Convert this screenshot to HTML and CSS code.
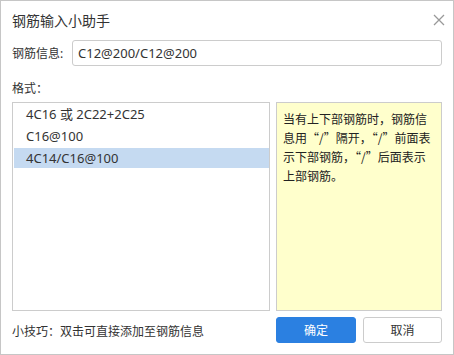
FILE: index.html
```html
<!DOCTYPE html>
<html lang="zh-CN">
<head>
    <meta charset="UTF-8">
    <title>钢筋输入小助手</title>
    <link rel="stylesheet" href="styles.css">
</head>
<body>
    <div class="dialog">
        <div class="header">
            <span class="title">钢筋输入小助手</span>
            <span class="close">
                <svg width="12" height="12" viewBox="0 0 12 12"><path d="M1 1L11 11M11 1L1 11" stroke="#999" stroke-width="1.3" fill="none"/></svg>
            </span>
        </div>
        <div class="row">
            <label for="info">钢筋信息:</label>
            <input type="text" id="info" value="C12@200/C12@200">
        </div>
        <div class="format-label">格式：</div>
        <div class="panels">
            <div class="list">
                <div class="item">4C16 或 2C22+2C25</div>
                <div class="item">C16@100</div>
                <div class="item selected">4C14/C16@100</div>
            </div>
            <div class="hint">当有上下部钢筋时，钢筋信息用“/”隔开，“/”前面表示下部钢筋，“/”后面表示上部钢筋。</div>
        </div>
        <div class="footer">
            <span class="tip">小技巧：双击可直接添加至钢筋信息</span>
            <button class="btn primary">确定</button>
            <button class="btn">取消</button>
        </div>
    </div>
</body>
</html>
```

FILE: styles.css
```css
body {
    margin: 0;
    font-family: "Noto Sans", "Noto Sans CJK SC", sans-serif;
    color: #333;
}
.dialog {
    width: 454px;
    height: 355px;
    box-sizing: border-box;
    border: 1px solid #c6c6c6;
    background: #fff;
    padding: 0 11px;
    display: flex;
    flex-direction: column;
}
.header {
    height: 38px;
    display: flex;
    align-items: center;
    justify-content: space-between;
}
.title {
    font-size: 14px;
}
.close {
    display: flex;
    margin-right: -3px;
}
.row {
    display: flex;
    align-items: center;
    gap: 8px;
    margin-top: 1px;
}
.row label {
    font-size: 12px;
    width: 52px;
}
.row input {
    flex: 1;
    height: 26px;
    box-sizing: border-box;
    border: 1px solid #ccc;
    border-radius: 3px;
    padding: 0 5px;
    font-family: inherit;
    font-size: 13px;
    color: #333;
    outline: none;
}
.format-label, .tip, .hint {
    font-family: "Noto Sans CJK SC", sans-serif;
}
.format-label {
    font-size: 12px;
    height: 36px;
    line-height: 44px;
}
.panels {
    display: flex;
    gap: 6px;
    height: 209px;
}
.list {
    width: 258px;
    box-sizing: border-box;
    border: 1px solid #ccc;
    padding: 1px 0 1px 1px;
    display: flex;
    flex-direction: column;
    gap: 2px;
}
.item {
    height: 20px;
    line-height: 20px;
    padding-left: 12px;
    font-size: 13px;
}
.item.selected {
    background: #c5daf1;
}
.hint {
    flex: 1;
    box-sizing: border-box;
    border: 1px solid #ccc;
    background: #ffffcc;
    padding: 6px 6px;
    font-size: 12px;
    line-height: 19px;
    color: #222;
}
.footer {
    display: flex;
    align-items: center;
    margin-top: 6px;
}
.tip {
    flex: 1;
    font-size: 12px;
}
.btn {
    width: 79px;
    height: 26px;
    border: 1px solid #ccc;
    border-radius: 3px;
    background: #fff;
    font-family: inherit;
    font-size: 12px;
    color: #333;
    margin-left: 7px;
}
.btn.primary {
    width: 80px;
    background: #2b80e1;
    border-color: #2b80e1;
    color: #fff;
}
```
